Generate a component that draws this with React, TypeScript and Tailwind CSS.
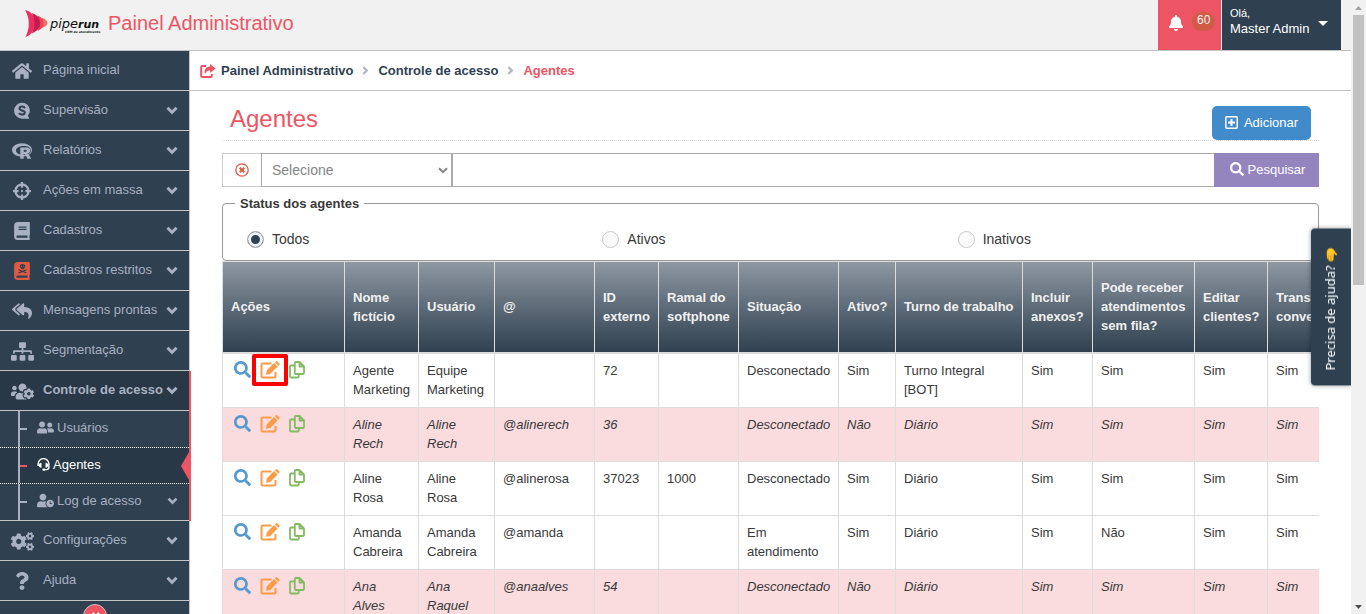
import { useState } from "react";
import type { ComponentType, ReactNode } from "react";
import {
  FaAngleDoubleLeft,
  FaBell,
  FaBook,
  FaBookDead,
  FaCogs,
  FaCrosshairs,
  FaHome,
  FaQuestion,
  FaReplyAll,
  FaRProject,
  FaSearch,
  FaSitemap,
  FaUserClock,
  FaUserFriends,
  FaUsersCog,
} from "react-icons/fa";

type Icon = ComponentType<{ className?: string }>;

interface Agent {
  name: string;
  user: string;
  handle: string;
  externalId: string;
  extension: string;
  status: string;
  active: boolean;
  shift: string;
  canAssist: string;
}

const AGENTS: Agent[] = [
  { name: "Agente Marketing", user: "Equipe Marketing", handle: "", externalId: "72", extension: "", status: "Desconectado", active: true, shift: "Turno Integral [BOT]", canAssist: "Sim" },
  { name: "Aline Rech", user: "Aline Rech", handle: "@alinerech", externalId: "36", extension: "", status: "Desconectado", active: false, shift: "Diário", canAssist: "Sim" },
  { name: "Aline Rosa", user: "Aline Rosa", handle: "@alinerosa", externalId: "37023", extension: "1000", status: "Desconectado", active: true, shift: "Diário", canAssist: "Sim" },
  { name: "Amanda Cabreira", user: "Amanda Cabreira", handle: "@amanda", externalId: "", extension: "", status: "Em atendimento", active: true, shift: "Diário", canAssist: "Não" },
  { name: "Ana Alves", user: "Ana Raquel", handle: "@anaalves", externalId: "54", extension: "", status: "Desconectado", active: false, shift: "Diário", canAssist: "Sim" },
];

const COLUMNS: { label: string; width: string }[] = [
  { label: "Ações", width: "w-[122px]" },
  { label: "Nome fictício", width: "w-[74px]" },
  { label: "Usuário", width: "w-[76px]" },
  { label: "@", width: "w-[100px]" },
  { label: "ID externo", width: "w-[64px]" },
  { label: "Ramal do softphone", width: "w-[80px]" },
  { label: "Situação", width: "w-[100px]" },
  { label: "Ativo?", width: "w-[57px]" },
  { label: "Turno de trabalho", width: "w-[127px]" },
  { label: "Incluir anexos?", width: "w-[70px]" },
  { label: "Pode receber atendimentos sem fila?", width: "w-[102px]" },
  { label: "Editar clientes?", width: "w-[73px]" },
  { label: "Transferir conversas?", width: "w-[86px]" },
];

function ChevronDown({ className }: { className?: string }) {
  return (
    <svg viewBox="0 0 12 9" className={className} aria-hidden="true">
      <path d="M1.500 1.800L6 6.300l4.500-4.500" fill="none" stroke="currentColor" strokeWidth="3" />
    </svg>
  );
}

function ChevronRight({ className }: { className?: string }) {
  return (
    <svg viewBox="0 0 7 9" className={className} aria-hidden="true">
      <path d="M1.300 1l3.500 3.500L1.300 8" fill="none" stroke="currentColor" strokeWidth="2.200" />
    </svg>
  );
}

function SupervisionIcon({ className }: { className?: string }) {
  return (
    <svg viewBox="0 0 18 18" className={className} aria-hidden="true">
      <path d="M9 .8a7.800 7.800 0 0 1 5.800 13l1.700 2.900H9A7.900 7.900 0 0 1 9 .8z" fill="currentColor" />
      <path d="M12 6.100C11.300 5 10.200 4.600 9.100 4.600 7.500 4.600 6.500 5.400 6.500 6.500c0 2.700 5.300 1.300 5.300 4 0 1.300-1.200 2.100-2.800 2.100-1.300 0-2.400-.5-3-1.600" fill="none" stroke="#2f4050" strokeWidth="2" />
    </svg>
  );
}

function HeadsetIcon({ className }: { className?: string }) {
  return (
    <svg viewBox="0 0 14 14" className={className} aria-hidden="true">
      <path d="M1.200 8.500V6.500a5.700 5.700 0 0 1 11.600 0v3.200c0 2-1 2.800-2.600 2.800H7" fill="none" stroke="currentColor" strokeWidth="1.500" />
      <path d="M4.800 5.200v5.300c-1.800 0-3-.9-3-2.600s1.200-2.700 3-2.700zM9.200 5.200v5.300c1.800 0 3-.9 3-2.600s-1.200-2.700-3-2.700z" fill="currentColor" />
      <rect x="5.800" y="11.200" width="3.200" height="2.500" rx="1" fill="currentColor" />
    </svg>
  );
}

function ShareIcon() {
  return (
    <svg viewBox="0 0 16 14" className="h-[14px] w-4 text-[#ed5565]" aria-hidden="true">
      <path d="M6 2H2.200Q1.200 2 1.200 3v8.900q0 1 1 1h8.600q1 0 1-1V10" fill="none" stroke="currentColor" strokeWidth="2" />
      <path d="M10 0l5.700 4.500L10 9V6.600C7.500 6.600 6 7.500 5 10.200 3.500 6 6 2.700 10 2.600z" fill="currentColor" />
    </svg>
  );
}

function EditIcon() {
  return (
    <svg viewBox="0 0 20 18" className="h-[18px] w-5 text-[#fe9b49]" aria-hidden="true">
      <path d="M11.500 2.500H2.700Q1.500 2.500 1.500 3.700v11.600q0 1.200 1.200 1.200h11.600q1.200 0 1.200-1.200V11" fill="none" stroke="currentColor" strokeWidth="2" />
      <path d="M14 2l3.600 3.600-7.300 7.300-4.300.9.800-4.500zM14.900 1.300L16 .3q.6-.5 1.200 0l2.200 2.200q.5.600 0 1.200l-1.100 1z" fill="currentColor" />
    </svg>
  );
}

function CopyIcon() {
  return (
    <svg viewBox="0 0 16 18" className="h-[18px] w-4 text-[#84bb62]" fill="none" stroke="currentColor" strokeWidth="1.800" strokeLinejoin="round" aria-hidden="true">
      <path d="M10.500 1H6.700q-.9 0-.9.900v10.200q0 .9.900.9h7.400q.9 0 .9-.9V5.500zM10.500 1v4.500H15" />
      <path d="M5.800 4.500H1.900q-.9 0-.9.900v10.200q0 .9.900.9h7q.9 0 .9-.9V13" />
    </svg>
  );
}

function Logo() {
  return (
    <svg viewBox="0 0 76 30" className="h-[30px] w-[76px] overflow-visible" role="img" aria-label="piperun">
      <path d="M18 10q5 1.500 5.500 4.800-.5 3.700-5.500 5.200z" fill="#f0706a" />
      <path d="M13.500 7.500c4.500 2 6 4 6 7.500s-1.500 6-6 8q3-8 0-15.500z" fill="#e8455a" />
      <path d="M8 5c6 2.500 8 5.500 8 10S14 22.500 8 25.500q4-10 0-20.500z" fill="#c41c4b" />
      <path d="M1 2c7.500 1.500 9.500 7 9.500 13S8.500 27 1.500 29C6 21 6 10 1 2z" fill="#ec2c62" />
      <g fontFamily="'DejaVu Sans', sans-serif" fontStyle="italic" fill="#111">
        <text x="26" y="20" fontSize="13">pipe</text>
        <text x="54" y="20" fontSize="11" fontWeight="700">run</text>
        <text x="41" y="25" fontSize="3" fontWeight="700">CRM de atendimento</text>
      </g>
    </svg>
  );
}

interface MenuItemProps {
  icon: Icon;
  iconSize?: string;
  label: string;
  arrow?: boolean;
  active?: boolean;
  danger?: boolean;
}

function MenuItem({ icon: ItemIcon, iconSize = "size-[18px]", label, arrow = true, active, danger }: MenuItemProps) {
  return (
    <a
      href="#"
      className={`flex h-10 items-center border-b border-[#c5c5c5] pr-[11px] pl-[10px] whitespace-nowrap ${active ? "bg-[#293846] font-bold" : ""}`}
    >
      <span className={`mt-px flex w-6 shrink-0 justify-center ${danger ? "text-[#dd5a43]" : ""}`}>
        <ItemIcon className={`${iconSize} shrink-0`} />
      </span>
      <span className="ml-[9px] flex-1 pb-px">{label}</span>
      {arrow && <ChevronDown className="h-[9px] w-3 shrink-0" />}
    </a>
  );
}

function SubItem({ icon: ItemIcon, iconSize = "size-[17px]", label, arrow, active, last }: MenuItemProps & { last?: boolean }) {
  return (
    <li className={last ? "" : "border-b border-dotted border-white"}>
      <a
        href="#"
        className={`relative flex items-center pr-[11px] pl-[18px] ${active ? "h-[35px] bg-[#293846] text-white" : "h-9"}`}
      >
        <span className="h-full w-[2px] bg-[#a7b1c2]" />
        <span className={`h-[2px] w-[7px] ${active ? "bg-[#ed5565]" : "bg-[#a7b1c2]"}`} />
        <ItemIcon className={`mb-[3px] ml-[10px] ${iconSize} shrink-0`} />
        <span className="ml-[3px] flex-1 pb-[2px]">{label}</span>
        {arrow && <ChevronDown className="mb-[2px] h-2 w-[11px] shrink-0" />}
        {active && (
          <span className="absolute top-1/2 right-0 -translate-y-1/2 border-y-[14px] border-r-8 border-y-transparent border-r-[#ed5565]" />
        )}
      </a>
    </li>
  );
}

function Sidebar() {
  return (
    <nav className="w-[190px] shrink-0 border-r border-[#c5c5c5] bg-[#2f4050] text-[13px] text-[#a7b1c2]">
      <MenuItem icon={FaHome} iconSize="size-5" label="Página inicial" arrow={false} />
      <MenuItem icon={SupervisionIcon} label="Supervisão" />
      <MenuItem icon={FaRProject} iconSize="size-5" label="Relatórios" />
      <MenuItem icon={FaCrosshairs} label="Ações em massa" />
      <MenuItem icon={FaBook} label="Cadastros" />
      <MenuItem icon={FaBookDead} label="Cadastros restritos" danger />
      <MenuItem icon={FaReplyAll} iconSize="size-5" label="Mensagens prontas" />
      <MenuItem icon={FaSitemap} iconSize="size-[23px]" label="Segmentação" />
      <div className="relative">
        <MenuItem icon={FaUsersCog} iconSize="size-[23px]" label="Controle de acesso" active />
        <ul className="border-b border-[#c5c5c5]">
          <SubItem icon={FaUserFriends} label="Usuários" />
          <SubItem icon={HeadsetIcon} iconSize="size-[13px]" label="Agentes" active />
          <SubItem icon={FaUserClock} label="Log de acesso" arrow last />
        </ul>
        <span className="absolute inset-y-0 -right-[2px] w-[2px] bg-[#ed5565]" />
      </div>
      <MenuItem icon={FaCogs} iconSize="size-[23px]" label="Configurações" />
      <MenuItem icon={FaQuestion} label="Ajuda" />
      <button aria-label="Recolher menu" className="mx-auto mt-[3px] flex size-6 items-center justify-center rounded-full border border-[#c5c5c5] bg-[#ed5565] text-white">
        <FaAngleDoubleLeft className="size-[13px]" />
      </button>
    </nav>
  );
}

function Header() {
  return (
    <header className="flex h-[51px] shrink-0 items-stretch border-b border-[#c0c0c0] bg-[#f1f1f1] pr-[10px]">
      <a href="#" className="flex items-center gap-2 pb-1 pl-6 text-xl text-[#ed5565]">
        <Logo />
        Painel Administrativo
      </a>
      <button className="ml-auto flex w-[63px] items-start gap-2 bg-[#ed5565] pt-3 pl-[10px] text-white">
        <FaBell className="mt-[3px] size-4" />
        <span className="h-[19px] rounded-full bg-[#d15b47] px-[5px] text-xs leading-4 text-[#f1f1f1]">60</span>
      </button>
      <button className="ml-px flex w-[119px] items-center bg-[#2f4050] pb-2 pl-2 text-left text-[13px] leading-[15px] text-white">
        <span className="whitespace-nowrap">
          <span className="block text-[11px]">Olá,</span>
          Master Admin
        </span>
        <svg viewBox="0 0 10 5" className="mt-[5px] ml-[9px] h-[5px] w-[10px]" aria-hidden="true">
          <path d="M0 0h10L5 5z" fill="currentColor" />
        </svg>
      </button>
    </header>
  );
}

function Breadcrumb() {
  return (
    <div className="flex h-10 items-center border-b border-[#c0c0c0] pl-[10px] text-[13px] font-bold text-[#2f4050]">
      <ShareIcon />
      <a href="#" className="ml-[5px]">Painel Administrativo</a>
      <ChevronRight className="mx-[9px] h-[9px] w-[7px] text-[#b2b6bf]" />
      <a href="#">Controle de acesso</a>
      <ChevronRight className="mx-[9px] h-[9px] w-[7px] text-[#b2b6bf]" />
      <span className="text-[#ed5565]">Agentes</span>
    </div>
  );
}

function SearchBar() {
  return (
    <form className="mt-3 flex h-[34px]" onSubmit={(e) => e.preventDefault()}>
      <button type="button" aria-label="Limpar filtro" className="flex w-[39px] items-center justify-center border border-r-0 border-[#ccc] text-[#dd5a43]">
        <svg viewBox="0 0 14 14" className="size-[14px]" fill="none" stroke="currentColor" strokeWidth="1.300" aria-hidden="true">
          <circle cx="7" cy="7" r="6.200" />
          <path d="M4.700 4.700l4.600 4.600M9.300 4.700L4.700 9.300" strokeWidth="2" />
        </svg>
      </button>
      <div className="relative w-[191px]">
        <select aria-label="Campo de busca" className="size-full appearance-none border border-[#aaa] bg-white pl-[10px] text-sm text-[#858585]">
          <option>Selecione</option>
        </select>
        <svg viewBox="0 0 10 7" className="pointer-events-none absolute top-[14px] right-1 h-[7px] w-[10px] text-[#858585]" aria-hidden="true">
          <path d="M1 1.200l4 4 4-4" fill="none" stroke="currentColor" strokeWidth="2" />
        </svg>
      </div>
      <input aria-label="Pesquisar agentes" className="min-w-0 flex-1 border border-r-0 border-[#aaa] px-3 text-sm" />
      <button className="flex w-[105px] items-center justify-center gap-1 bg-[#9585bf] pl-[2px] text-[13px] text-white">
        <FaSearch className="mb-[2px] size-[14px]" />
        Pesquisar
      </button>
    </form>
  );
}

function StatusFilter() {
  const [status, setStatus] = useState("Todos");
  return (
    <fieldset className="mt-[9px] rounded-[4px] border border-[#999] pr-[5px] pl-3">
      <legend className="px-[5px] text-[13px] leading-[15px] font-bold text-[#393939]">Status dos agentes</legend>
      <div className="grid grid-cols-3 pt-[18px] pb-[11px] pl-3">
        {["Todos", "Ativos", "Inativos"].map((option) => (
          <label key={option} className="flex items-center gap-2 text-sm text-[#393939]">
            <input
              type="radio"
              name="status"
              checked={status === option}
              onChange={() => setStatus(option)}
              className="size-[17px] appearance-none rounded-full border border-[#c8c8c8] bg-[#fafafa] checked:border-[#adb8c0] checked:bg-[#2f4050] checked:shadow-[inset_0_0_0_3px_#f0f5fa]"
            />
            {option}
          </label>
        ))}
      </div>
    </fieldset>
  );
}

function Cell({ children }: { children?: ReactNode }) {
  return <td className="border border-[#ddd] px-2 pt-[7px] pb-2">{children}</td>;
}

function AgentRow({ agent, highlighted }: { agent: Agent; highlighted: boolean }) {
  return (
    <tr className={`align-top ${agent.active ? "" : "bg-[#fadcdf] italic"}`}>
      <Cell>
        <div className="flex items-start gap-[9px] pl-[3px]">
          <button aria-label="Visualizar">
            <FaSearch className="size-[17px] text-[#5599cf]" />
          </button>
          <button aria-label="Editar" className="relative">
            <EditIcon />
            {highlighted && <span className="absolute -inset-x-2 -inset-y-[7px] rounded-[2px] border-4 border-[#fe0000]" />}
          </button>
          <button aria-label="Duplicar">
            <CopyIcon />
          </button>
        </div>
      </Cell>
      <Cell>{agent.name}</Cell>
      <Cell>{agent.user}</Cell>
      <Cell>{agent.handle}</Cell>
      <Cell>{agent.externalId}</Cell>
      <Cell>{agent.extension}</Cell>
      <Cell>{agent.status}</Cell>
      <Cell>{agent.active ? "Sim" : "Não"}</Cell>
      <Cell>{agent.shift}</Cell>
      <Cell>Sim</Cell>
      <Cell>{agent.canAssist}</Cell>
      <Cell>Sim</Cell>
      <Cell>Sim</Cell>
    </tr>
  );
}

function AgentTable() {
  return (
    <div className="overflow-hidden">
      <table className="w-[1131px] table-fixed border-collapse text-[13px] leading-[19px] text-[#393939]">
        <colgroup>
          {COLUMNS.map(({ label, width }) => (
            <col key={label} className={width} />
          ))}
        </colgroup>
        <thead className="bg-linear-to-b from-[#8f98a1] to-[#2f4050] text-[#f1f1f1]">
          <tr className="h-[91px]">
            {COLUMNS.map(({ label }) => (
              <th key={label} className="border border-b-2 border-[#ddd] px-2 text-left align-middle">
                {label}
              </th>
            ))}
          </tr>
        </thead>
        <tbody>
          {AGENTS.map((agent, i) => (
            <AgentRow key={agent.name} agent={agent} highlighted={i === 0} />
          ))}
        </tbody>
      </table>
    </div>
  );
}

function HelpTab() {
  return (
    <button className="fixed top-[229px] right-[15px] flex w-10 rotate-180 items-center rounded-r-[4px] bg-[#2f4050] pt-[15px] pb-[17px] font-['Noto_Sans',sans-serif] text-[13px] text-white shadow-[0_0_5px_rgba(0,0,0,0.4)] [writing-mode:vertical-rl]">
      Precisa de ajuda? 🤚
    </button>
  );
}

function ScrollTrack() {
  return (
    <div className="fixed inset-y-0 right-0 flex w-[15px] flex-col items-center bg-[#f1f1f1]" aria-hidden="true">
      <svg viewBox="0 0 15 15" className="h-[15px] w-[15px] shrink-0">
        <path d="M4 10h7L7.500 6z" fill="#a3a3a3" />
      </svg>
      <div className="h-[44%] w-[11px] bg-[#c1c1c1]" />
      <svg viewBox="0 0 15 15" className="mt-auto h-[15px] w-[15px] shrink-0">
        <path d="M4 6h7l-3.500 4z" fill="#505050" />
      </svg>
    </div>
  );
}

export default function App() {
  return (
    <div className="flex h-screen flex-col overflow-hidden bg-white pr-[15px] font-['Liberation_Sans',Arial,sans-serif]">
      <Header />
      <div className="flex min-h-0 flex-1">
        <Sidebar />
        <main className="min-w-0 flex-1">
          <Breadcrumb />
          <div className="px-8 pt-[15px]">
            <div className="flex items-start justify-between border-b border-dotted border-[#ddd] px-2">
              <h1 className="text-2xl leading-[26px] text-[#ed5565]">Agentes</h1>
              <button className="flex h-[34px] w-[99px] items-center justify-center gap-[6px] rounded-[5px] bg-[#428bca] text-[13px] text-white">
                <svg viewBox="0 0 13 13" className="mb-[2px] size-[13px]" fill="none" stroke="currentColor" strokeWidth="1.500" aria-hidden="true">
                  <rect x=".8" y=".8" width="11.400" height="11.400" rx="1" />
                  <path d="M6.500 3v7M3 6.500h7" strokeWidth="2" />
                </svg>
                Adicionar
              </button>
            </div>
            <SearchBar />
            <StatusFilter />
            <AgentTable />
          </div>
        </main>
      </div>
      <HelpTab />
      <ScrollTrack />
    </div>
  );
}
